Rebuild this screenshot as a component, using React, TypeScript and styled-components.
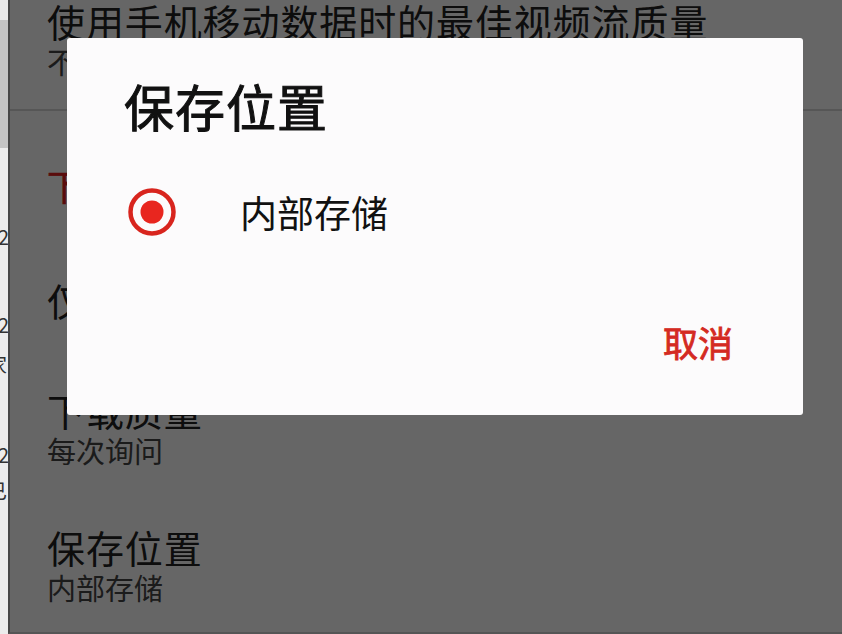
import React from "react";
import styled, { createGlobalStyle } from "styled-components";

const GlobalStyle = createGlobalStyle`
  html, body {
    margin: 0;
    padding: 0;
    width: 842px;
    height: 634px;
    overflow: hidden;
    font-family: "Noto Sans CJK SC", "Noto Sans", sans-serif;
  }
`;

const Screen = styled.div`
  display: flex;
  width: 842px;
  height: 634px;
`;

// sliver of the window sitting behind the phone
const BackStrip = styled.div`
  width: 8px;
  flex: none;
  overflow: hidden;
  display: flex;
  flex-direction: column;
  background: linear-gradient(#e9e9e9 0 20px, #c4c4c4 20px 148px, #ececec 148px);
`;

const BackLine = styled.div<{ $top: number }>`
  margin-top: ${(p) => p.$top}px;
  margin-left: -13px;
  font-size: 20px;
  line-height: 22px;
  color: #333;
  white-space: nowrap;
`;

const Phone = styled.div`
  flex: 1;
  position: relative;
  border-left: 2px solid #474747;
  border-bottom: 2px solid #555;
  background: #fff;
  overflow: hidden;
`;

const List = styled.div`
  display: flex;
  flex-direction: column;
  padding-left: 37px;
  color: #222;
`;

const Item = styled.div<{ $pt: number; $pb: number }>`
  display: flex;
  flex-direction: column;
  padding: ${(p) => p.$pt}px 0 ${(p) => p.$pb}px;
`;

const Title = styled.div`
  font-size: 38px;
  line-height: 44px;
  letter-spacing: 0.9px;
  white-space: nowrap;
`;

const Sub = styled.div`
  font-size: 29px;
  line-height: 36px;
  color: #444;
  white-space: nowrap;
`;

const Divider = styled.div`
  height: 2px;
  margin-left: -37px;
  background: #d8d8d8;
`;

const Section = styled.div`
  font-size: 36px;
  line-height: 44px;
  color: #e01e1e;
  -webkit-text-stroke: 0.6px #e01e1e;
  padding: 52px 0 43px;
`;

const Scrim = styled.div`
  position: absolute;
  inset: 0;
  background: rgba(0, 0, 0, 0.6);
  padding: 38px 0 0 57px;
`;

const Dialog = styled.div`
  width: 736px;
  height: 377px;
  box-sizing: border-box;
  background: #fcfbfc;
  border-radius: 3px;
  display: flex;
  flex-direction: column;
  padding: 38px 70px 0 0;
`;

const DialogTitle = styled.div`
  font-size: 50px;
  line-height: 58px;
  letter-spacing: 1px;
  color: #111;
  -webkit-text-stroke: 1px #111;
  padding-left: 57px;
`;

const Option = styled.div`
  display: flex;
  align-items: center;
  height: 76px;
  margin-top: 40px;
  padding-left: 61px;
  gap: 64px;
`;

const OptionLabel = styled.span`
  font-size: 37px;
  line-height: 48px;
  color: #111;
`;

const Actions = styled.div`
  display: flex;
  justify-content: flex-end;
  margin-top: 68px;
`;

const TextButton = styled.span`
  font-size: 35px;
  line-height: 48px;
  color: #d42a22;
  -webkit-text-stroke: 0.8px #d42a22;
`;

const Radio = () => (
  <svg width="48" height="48" viewBox="0 0 48 48">
    <circle cx="24" cy="24" r="21.5" fill="none" stroke="#d8251e" strokeWidth="4.5" />
    <circle cx="24" cy="24" r="11.5" fill="#e8261f" />
  </svg>
);

export default function App() {
  return (
    <Screen>
      <GlobalStyle />
      <BackStrip>
        <BackLine $top={226}>12</BackLine>
        <BackLine $top={66}>22</BackLine>
        <BackLine $top={18}>家</BackLine>
        <BackLine $top={68}>32</BackLine>
        <BackLine $top={14}>已</BackLine>
      </BackStrip>
      <Phone>
        <List>
          <Item $pt={0} $pb={30} style={{ marginTop: -1 }}>
            <Title>使用手机移动数据时的最佳视频流质量</Title>
            <Sub>不限制</Sub>
          </Item>
          <Divider />
          <Section>下载</Section>
          <Item $pt={28} $pb={38}>
            <Title>仅限 WLAN</Title>
          </Item>
          <Item $pt={28} $pb={29}>
            <Title>下载质量</Title>
            <Sub>每次询问</Sub>
          </Item>
          <Item $pt={28} $pb={29}>
            <Title>保存位置</Title>
            <Sub>内部存储</Sub>
          </Item>
        </List>
        <Scrim>
          <Dialog>
            <DialogTitle>保存位置</DialogTitle>
            <Option>
              <Radio />
              <OptionLabel>内部存储</OptionLabel>
            </Option>
            <Actions>
              <TextButton>取消</TextButton>
            </Actions>
          </Dialog>
        </Scrim>
      </Phone>
    </Screen>
  );
}
